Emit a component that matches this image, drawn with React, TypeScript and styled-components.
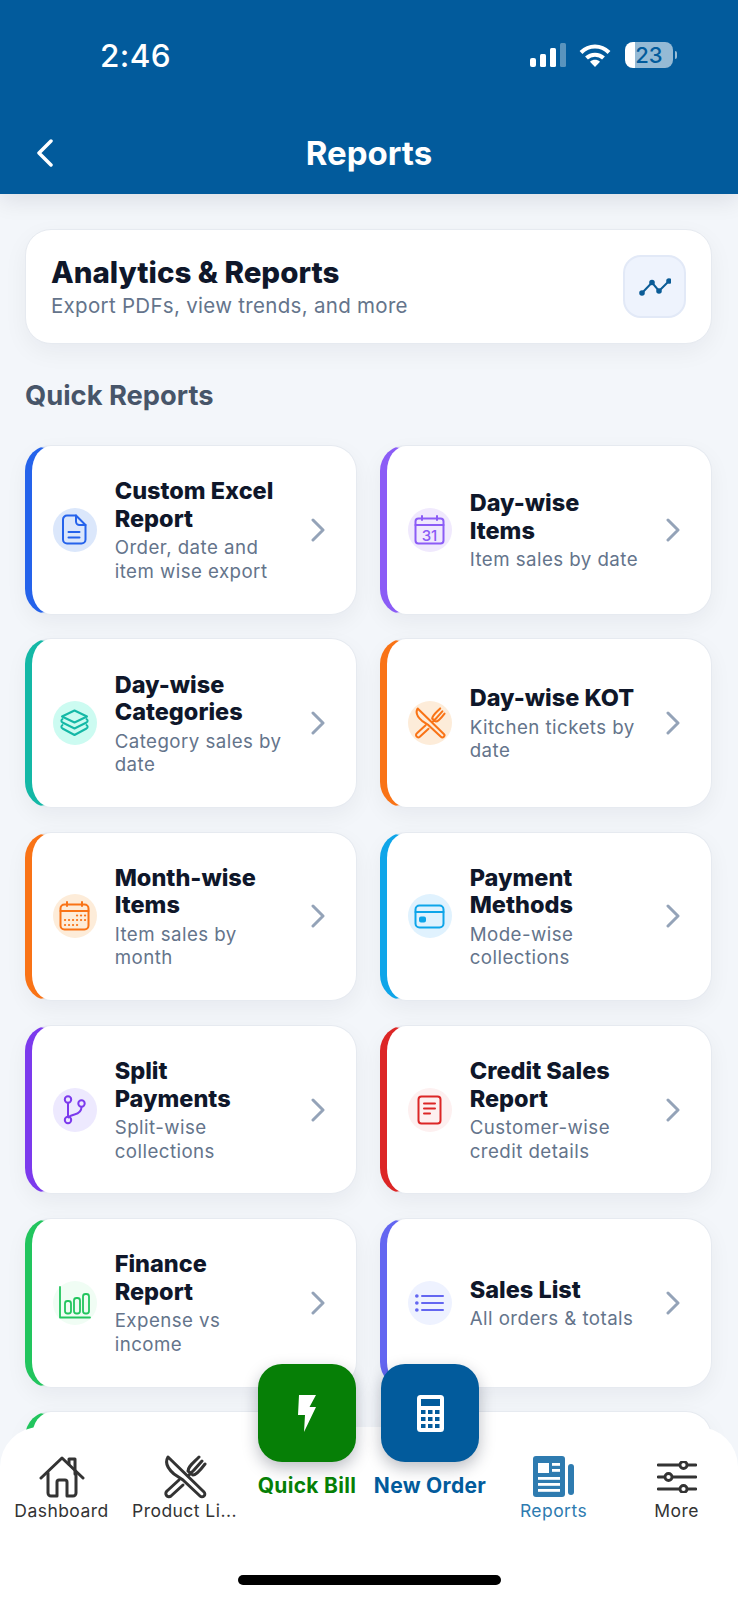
import { ReactNode } from "react"
import styled, { createGlobalStyle } from "styled-components"

const GlobalStyle = createGlobalStyle`
  html, body {
    margin: 0;
    padding: 0;
    background: #f3f6fa;
    font-family: Inter, "Liberation Sans", sans-serif;
  }
  * { box-sizing: border-box; }
`

const Root = styled.div`
  position: relative;
  width: 738px;
  height: 1600px;
  overflow: hidden;
  background: #f3f6fa;
  display: flex;
  flex-direction: column;
`

const Header = styled.header`
  flex: none;
  height: 194px;
  background: #025b9c;
  color: #fff;
  box-shadow: 0 6px 22px rgba(15, 23, 42, 0.1);
  position: relative;
  z-index: 1;
`

const StatusBar = styled.div`
  height: 110px;
  display: flex;
  align-items: center;
  justify-content: space-between;
  padding: 0 65px 0 100px;
`

const Time = styled.div`
  font-size: 31.5px;
  font-weight: 500;
  letter-spacing: 0.4px;
`

const StatusIcons = styled.div`
  display: flex;
  align-items: center;
  gap: 14px;
`

const SignalWrap = styled.div`
  display: flex;
  margin-right: -2px;
`

const Battery = styled.div`
  position: relative;
  width: 48px;
  height: 26px;
  border-radius: 8px;
  background: linear-gradient(90deg, #fff 0 21%, rgba(255, 255, 255, 0.58) 21% 100%);
  color: #025b9c;
  font-size: 22px;
  font-weight: 500;
  line-height: 26px;
  text-align: center;
  &::after {
    content: "";
    position: absolute;
    right: -4px;
    top: 9px;
    width: 2px;
    height: 8px;
    border-radius: 0 2px 2px 0;
    background: rgba(255, 255, 255, 0.6);
  }
`

const TitleBar = styled.div`
  height: 86px;
  display: grid;
  grid-template-columns: 1fr auto 1fr;
  align-items: center;
  padding: 0 36px;
`

const PageTitle = styled.div`
  font-size: 33px;
  font-weight: 700;
`

const Content = styled.main`
  flex: 1;
  padding: 35px 26px 0 25px;
`

const Hero = styled.section`
  height: 115px;
  background: #fff;
  border: 1px solid #e6eaf0;
  border-radius: 26px;
  box-shadow: 0 8px 24px rgba(15, 23, 42, 0.05);
  display: flex;
  align-items: center;
  justify-content: space-between;
  padding: 0 25px 0 25px;
`

const HeroText = styled.div`
  padding-top: 2px;
`

const HeroTitle = styled.div`
  font-size: 29.5px;
  font-weight: 800;
  line-height: 35px;
  color: #0f172a;
`

const HeroSub = styled.div`
  margin-top: 2px;
  font-size: 20.5px;
  line-height: 28px;
  color: #64748b;
  letter-spacing: 0.3px;
`

const HeroIcon = styled.div`
  width: 63px;
  height: 63px;
  border-radius: 18px;
  background: #eef3fd;
  border: 2px solid #e2e9f7;
  display: flex;
  align-items: center;
  justify-content: center;
`

const SectionTitle = styled.h2`
  margin: 36px 0 33px;
  font-size: 27.3px;
  font-weight: 700;
  line-height: 32px;
  color: #475569;
`

const Grid = styled.div`
  display: grid;
  grid-template-columns: 1fr 1fr;
  column-gap: 23px;
  row-gap: 23.8px;
`

const Card = styled.div<{ $accent: string }>`
  height: 169.5px;
  background: #fff;
  border: 1px solid #e6eaf0;
  border-left: 7.5px solid ${(p) => p.$accent};
  border-radius: 26px;
  box-shadow: 0 8px 22px rgba(15, 23, 42, 0.05);
  display: flex;
  align-items: center;
  padding: 0 31px 0 20.7px;
`

const IconCircle = styled.div<{ $bg: string; $color: string }>`
  flex: none;
  width: 44px;
  height: 44px;
  border-radius: 50%;
  background: ${(p) => p.$bg};
  color: ${(p) => p.$color};
  display: flex;
  align-items: center;
  justify-content: center;
`

const CardText = styled.div`
  flex: none;
  width: 170px;
  margin-left: 18px;
  margin-right: auto;
  padding-top: 1px;
`

const CardTitle = styled.div`
  font-size: 23.5px;
  font-weight: 800;
  line-height: 27.5px;
  color: #0f172a;
`

const CardSub = styled.div`
  margin-top: 4px;
  font-size: 18.7px;
  line-height: 23.5px;
  letter-spacing: 0.45px;
  color: #64748b;
`

const BottomNav = styled.nav`
  position: absolute;
  left: 0;
  right: 0;
  bottom: 0;
  height: 173px;
  background: #fff;
  border-radius: 40px 40px 0 0;
  display: grid;
  grid-template-columns: repeat(6, 1fr);
  align-items: start;
  padding-top: 28px;
  z-index: 2;
`

const NavItem = styled.div<{ $active?: boolean }>`
  display: flex;
  flex-direction: column;
  align-items: center;
  color: ${(p) => (p.$active ? "#2e7bb0" : "#333")};
`

const NavIcon = styled.div`
  height: 43px;
  display: flex;
  align-items: center;
  justify-content: center;
`

const NavLabel = styled.div`
  font-size: 17.5px;
  line-height: 26px;
  letter-spacing: 0.45px;
  white-space: nowrap;
`

const FabItem = styled.div<{ $color: string }>`
  margin: -91px 0 0 -1px;
  display: flex;
  flex-direction: column;
  align-items: center;
  color: ${(p) => p.$color};
`

const Fab = styled.div<{ $color: string }>`
  width: 98px;
  height: 98px;
  border-radius: 24px;
  background: ${(p) => p.$color};
  box-shadow: 0 6px 16px rgba(15, 23, 42, 0.28);
  display: flex;
  align-items: center;
  justify-content: center;
`

const FabLabel = styled.div`
  margin-top: 11px;
  font-size: 21px;
  font-weight: 700;
  line-height: 26px;
  letter-spacing: 0.3px;
  white-space: nowrap;
`

const HomeIndicator = styled.div`
  position: absolute;
  left: 238px;
  bottom: 15px;
  width: 263px;
  height: 10px;
  border-radius: 5px;
  background: #000;
`

const Stroke = ({ w, h, box, sw = 2, children }: { w: number; h: number; box: string; sw?: number; children: ReactNode }) => (
  <svg width={w} height={h} viewBox={box} fill="none" stroke="currentColor" strokeWidth={sw} strokeLinecap="round" strokeLinejoin="round">
    {children}
  </svg>
)

const SignalIcon = () => (
  <svg width="37" height="24" viewBox="0 0 37 24" fill="#fff">
    <rect x="0" y="15" width="6" height="9" rx="2" />
    <rect x="10" y="11" width="6" height="13" rx="1.5" />
    <rect x="20" y="5" width="6" height="19" rx="1.5" />
    <rect x="30" y="0" width="6" height="24" rx="1.5" opacity="0.35" />
  </svg>
)

const WifiIcon = () => (
  <svg width="32" height="23" viewBox="0 0 32 23">
    <g fill="none" stroke="#fff" strokeWidth="4">
      <path d="M2 8.5C10 .5 22 .5 30 8.5" />
      <path d="M7.5 14C12 9.5 20 9.5 24.5 14" />
    </g>
    <path d="M16 23l-5-5.200c3-2.600 7-2.600 10 0z" fill="#fff" />
  </svg>
)

const DocIcon = () => (
  <Stroke w={25} h={31} box="0 0 25 31">
    <path d="M5 1.500h9l9.500 9.500v14.500a4 4 0 0 1-4 4H5a4 4 0 0 1-4-4v-20a4 4 0 0 1 4-4z" />
    <path d="M14 1.500v6a3.500 3.500 0 0 0 3.500 3.500h6" />
    <path d="M6.500 18h11M6.500 23.500h11" />
  </Stroke>
)

const CalendarNumberIcon = () => (
  <Stroke w={31} h={30} box="0 0 31 30">
    <rect x="1.500" y="3.500" width="28" height="25" rx="3" />
    <path d="M1.500 10h28M8 1v4M23 1v4" />
    <text x="15.500" y="25.500" textAnchor="middle" fontFamily="Inter, sans-serif" fontSize="15" fontWeight="500" fill="currentColor" stroke="none">
      31
    </text>
  </Stroke>
)

const LayersIcon = () => (
  <Stroke w={29} h={28} box="0 0 29 28">
    <path d="M14.500 1.500l12.500 6-12.500 6-12.500-6z" />
    <path d="M2.500 10c-1.500 1-1.500 2.500 0 3.500l12 6 12-6c1.500-1 1.500-2.500 0-3.500" />
    <path d="M2.500 16c-1.500 1-1.500 2.500 0 3.500l12 6.500 12-6.500c1.500-1 1.500-2.500 0-3.500" />
  </Stroke>
)

const CutleryIcon = ({ size, sw }: { size: number; sw: number }) => (
  <Stroke w={size} h={size} box="0 0 44 44" sw={sw}>
    <path d="M5 2L41 37a2.800 2.800 0 0 1-4 4L20 25l-9-6C4 13 2 7 5 2z" />
    <path d="M16 25L4 36a3 3 0 0 0 4 5l12-11" />
    <path d="M26 20l5-5M25 16c0-4 3-6 11-14M31 15l8-9M30 20c3 0 6-3 12-11M25 16l5 4" />
  </Stroke>
)

const CalendarDotsIcon = () => (
  <Stroke w={31} h={30} box="0 0 31 30">
    <rect x="1.500" y="3.500" width="28" height="25" rx="4" />
    <path d="M1.500 10h28M8 1v4M23 1v4" />
    <path
      strokeWidth="2.200"
      d="M18 14.500h.1M22 14.500h.1M26 14.500h.1M6 19h.1M10 19h.1M14 19h.1M18 19h.1M22 19h.1M26 19h.1M6 24h.1M10 24h.1M14 24h.1M18 24h.1"
    />
  </Stroke>
)

const CreditCardIcon = () => (
  <Stroke w={31} h={25} box="0 0 31 25">
    <rect x="1.500" y="1.500" width="28" height="22" rx="4" />
    <path d="M1.500 8h28" />
    <rect x="6" y="13.500" width="5" height="4" rx="1" fill="currentColor" />
  </Stroke>
)

const BranchIcon = () => (
  <Stroke w={23} h={30} box="0 0 23 30">
    <circle cx="5" cy="4.500" r="3.200" />
    <circle cx="5" cy="25" r="3.200" />
    <circle cx="18.500" cy="8.500" r="3.200" />
    <path d="M5 8v13.500M18.500 12c0 5-3 6.500-7 7.500-3 .8-5 1.500-6 3" />
  </Stroke>
)

const ReceiptIcon = () => (
  <Stroke w={25} h={30} box="0 0 25 30">
    <rect x="1.500" y="1.500" width="22" height="27" rx="3" />
    <path d="M7 8.500h11M7 13.500h11M7 18.500h6" />
  </Stroke>
)

const BarsIcon = () => (
  <Stroke w={33} h={34} box="0 0 33 34" sw={1.800}>
    <path d="M2 1v30.500h30" />
    <rect x="7" y="15" width="6" height="12.500" rx="2.500" />
    <rect x="16" y="12" width="6" height="15.500" rx="2.500" />
    <rect x="25" y="8" width="6" height="19.500" rx="2.500" />
  </Stroke>
)

const ListIcon = () => (
  <Stroke w={29} h={20} box="0 0 29 20">
    <path d="M7 3h21M7 10h21M7 17h21" />
    <path strokeWidth="3.600" d="M1.800 3h.1M1.800 10h.1M1.800 17h.1" />
  </Stroke>
)

const ChevronIcon = () => (
  <svg width="14" height="24" viewBox="0 0 14 24" fill="none" stroke="#94a3b8" strokeWidth="3" strokeLinecap="round" strokeLinejoin="round">
    <path d="M2 2l10 10L2 22" />
  </svg>
)

const HomeIcon = () => (
  <Stroke w={46} h={42} box="0 0 46 42" sw={3}>
    <path d="M2 22L23 2l21 20" />
    <path d="M30 8V3h6v15" />
    <path d="M9 17v20a3 3 0 0 0 3 3h6V26a2 2 0 0 1 2-2h6a2 2 0 0 1 2 2v14h6a3 3 0 0 0 3-3V17" />
  </Stroke>
)

const ReportsIcon = () => (
  <svg width="41" height="41" viewBox="0 0 41 41">
    <rect x="0" y="0" width="32" height="41" rx="3" fill="#2e7bb0" />
    <rect x="35" y="8" width="6" height="31" rx="3" fill="#2e7bb0" />
    <g fill="#fff">
      <rect x="5" y="7" width="11" height="10" />
      <rect x="19" y="7" width="8" height="2.800" />
      <rect x="19" y="13" width="8" height="2.800" />
      <rect x="5" y="21" width="22" height="2.800" />
      <rect x="5" y="27" width="22" height="2.800" />
      <rect x="5" y="33" width="22" height="2.800" />
    </g>
  </svg>
)

const SlidersIcon = () => (
  <Stroke w={40} h={32} box="0 0 40 32" sw={2.800}>
    <path d="M1 4h21M31 4h8M1 16h6M16 16h23M1 28h21M31 28h8" />
    <circle cx="26.500" cy="4" r="3.500" />
    <circle cx="11.500" cy="16" r="3.500" />
    <circle cx="26.500" cy="28" r="3.500" />
  </Stroke>
)

const BoltIcon = () => (
  <svg width="18" height="37" viewBox="0 0 18 37" fill="#fff">
    <polygon points="1,0 18,0 11.500,12 18,12 6,37 7,20 0,20" />
  </svg>
)

const CalculatorIcon = () => (
  <svg width="27" height="37" viewBox="0 0 27 37">
    <rect width="27" height="37" rx="3.500" fill="#fff" />
    <rect x="4" y="4" width="19" height="7" fill="#025b9c" />
    <g fill="#025b9c">
      {[15, 22, 29].flatMap((y) =>
        [4, 11, 18].map((x) => <rect key={`${x}-${y}`} x={x} y={y} width="4.500" height="4" />),
      )}
    </g>
  </svg>
)

interface Report {
  title: string
  sub: string
  accent: string
  bg: string
  color: string
  icon: ReactNode
}

const reports: Report[] = [
  { title: "Custom Excel Report", sub: "Order, date and item wise export", accent: "#2563eb", bg: "#dbe7fb", color: "#2563eb", icon: <DocIcon /> },
  { title: "Day-wise Items", sub: "Item sales by date", accent: "#8b5cf6", bg: "#f0e9fd", color: "#8b5cf6", icon: <CalendarNumberIcon /> },
  { title: "Day-wise Categories", sub: "Category sales by date", accent: "#14b8a6", bg: "#ccfbf1", color: "#14b8a6", icon: <LayersIcon /> },
  { title: "Day-wise KOT", sub: "Kitchen tickets by date", accent: "#f97316", bg: "#fdecd9", color: "#f97316", icon: <CutleryIcon size={32} sw={2.800} /> },
  { title: "Month-wise Items", sub: "Item sales by month", accent: "#f97316", bg: "#fdecd9", color: "#f97316", icon: <CalendarDotsIcon /> },
  { title: "Payment Methods", sub: "Mode-wise collections", accent: "#0ea5e9", bg: "#e0f2fe", color: "#0ea5e9", icon: <CreditCardIcon /> },
  { title: "Split Payments", sub: "Split-wise collections", accent: "#7c3aed", bg: "#ede9fe", color: "#7c3aed", icon: <BranchIcon /> },
  { title: "Credit Sales Report", sub: "Customer-wise credit details", accent: "#dc2626", bg: "#fdf0f0", color: "#dc2626", icon: <ReceiptIcon /> },
  { title: "Finance Report", sub: "Expense vs income", accent: "#22c55e", bg: "#f0fdf4", color: "#22c55e", icon: <BarsIcon /> },
  { title: "Sales List", sub: "All orders & totals", accent: "#6366f1", bg: "#eef2ff", color: "#6366f1", icon: <ListIcon /> },
]

const App = () => {
  return (
    <Root>
      <GlobalStyle />
      <Header>
        <StatusBar>
          <Time>2:46</Time>
          <StatusIcons>
            <SignalWrap>
              <SignalIcon />
            </SignalWrap>
            <WifiIcon />
            <Battery>23</Battery>
          </StatusIcons>
        </StatusBar>
        <TitleBar>
          <svg width="18" height="28" viewBox="0 0 18 28" fill="none" stroke="#fff" strokeWidth="3.500" strokeLinecap="round" strokeLinejoin="round">
            <path d="M15 2L3 14l12 12" />
          </svg>
          <PageTitle>Reports</PageTitle>
        </TitleBar>
      </Header>

      <Content>
        <Hero>
          <HeroText>
            <HeroTitle>Analytics &amp; Reports</HeroTitle>
            <HeroSub>Export PDFs, view trends, and more</HeroSub>
          </HeroText>
          <HeroIcon>
            <svg width="32" height="18" viewBox="0 0 32 18" fill="#0b5c97" stroke="#0b5c97" strokeWidth="2">
              <path d="M3 15L13 4.500 20 13 30 3" fill="none" />
              <circle cx="3" cy="15" r="1.800" />
              <circle cx="13" cy="4.500" r="1.800" />
              <circle cx="20" cy="13" r="1.800" />
              <circle cx="30" cy="3" r="1.800" />
            </svg>
          </HeroIcon>
        </Hero>

        <SectionTitle>Quick Reports</SectionTitle>

        <Grid>
          {reports.map((report) => (
            <Card key={report.title} $accent={report.accent}>
              <IconCircle $bg={report.bg} $color={report.color}>
                {report.icon}
              </IconCircle>
              <CardText>
                <CardTitle>{report.title}</CardTitle>
                <CardSub>{report.sub}</CardSub>
              </CardText>
              <ChevronIcon />
            </Card>
          ))}
          <Card $accent="#22c55e" />
          <Card $accent="#025b9c" />
        </Grid>
      </Content>

      <BottomNav>
        <NavItem>
          <NavIcon>
            <HomeIcon />
          </NavIcon>
          <NavLabel>Dashboard</NavLabel>
        </NavItem>
        <NavItem>
          <NavIcon>
            <CutleryIcon size={44} sw={3} />
          </NavIcon>
          <NavLabel>Product Li...</NavLabel>
        </NavItem>
        <FabItem $color="#067f06">
          <Fab $color="#067f06">
            <BoltIcon />
          </Fab>
          <FabLabel>Quick Bill</FabLabel>
        </FabItem>
        <FabItem $color="#025b9c">
          <Fab $color="#025b9c">
            <CalculatorIcon />
          </Fab>
          <FabLabel>New Order</FabLabel>
        </FabItem>
        <NavItem $active>
          <NavIcon>
            <ReportsIcon />
          </NavIcon>
          <NavLabel>Reports</NavLabel>
        </NavItem>
        <NavItem>
          <NavIcon>
            <SlidersIcon />
          </NavIcon>
          <NavLabel>More</NavLabel>
        </NavItem>
        <HomeIndicator />
      </BottomNav>
    </Root>
  )
}

export default App
